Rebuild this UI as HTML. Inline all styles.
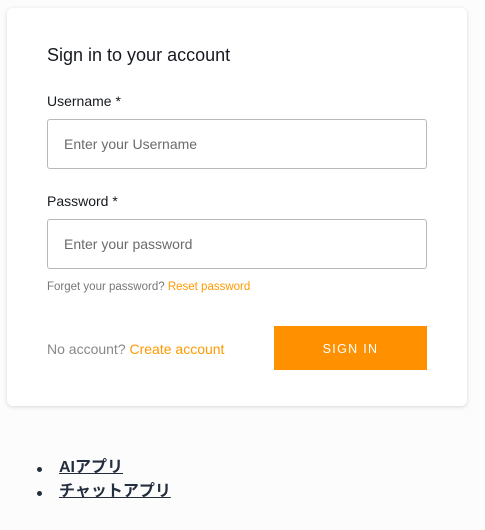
<!DOCTYPE html>
<html><head><meta charset="utf-8"><style>
body{margin:0;width:485px;height:530px;background:#fcfcfd;font-family:"Liberation Sans","Noto Sans CJK JP",sans-serif;position:relative;overflow:hidden}
.card{position:absolute;left:7px;top:8px;width:460px;height:398px;background:#fff;border-radius:6px;box-shadow:0 1px 4px rgba(0,0,0,.15)}
.a{position:absolute;white-space:nowrap}
.in{position:absolute;left:40px;border:1px solid #b8b8b8;border-radius:3px;box-sizing:border-box;width:380px;height:50px}
.in span{position:absolute;left:16px;top:16px;font-size:14px;color:#6b6b6b}
ul{position:absolute;left:59px;top:456px;margin:0;padding:0;list-style:none;font-size:16px;font-weight:bold;line-height:24px;color:#232f3e}
li{position:relative}
li:before{content:"";position:absolute;left:-22px;top:11px;width:5px;height:5px;border-radius:50%;background:#232f3e}
ul a{color:#232f3e;text-decoration:underline}
</style></head><body>
<div class="card">
<div class="a" style="left:40px;top:37px;font-size:18px;color:#16191f">Sign in to your account</div>
<div class="a" style="left:40px;top:85px;font-size:14px;color:#16191f">Username *</div>
<div class="in" style="top:111px"><span>Enter your Username</span></div>
<div class="a" style="left:40px;top:185px;font-size:14px;color:#16191f">Password *</div>
<div class="in" style="top:211px"><span>Enter your password</span></div>
<div class="a" style="left:40px;top:273px;font-size:11.5px;color:#777">Forget your password? <span style="color:#ff9900">Reset password</span></div>
<div class="a" style="left:40px;top:333px;font-size:14px;color:#888">No account? <span style="color:#ff9900">Create account</span></div>
<div class="a" style="left:267px;top:318px;width:153px;height:44px;background:#ff9000;color:#fff;font-size:12.5px;letter-spacing:1.3px;text-align:center;line-height:46px">SIGN IN</div>
</div>
<ul><li><a>AIアプリ</a></li><li><a>チャットアプリ</a></li></ul>
</body></html>
